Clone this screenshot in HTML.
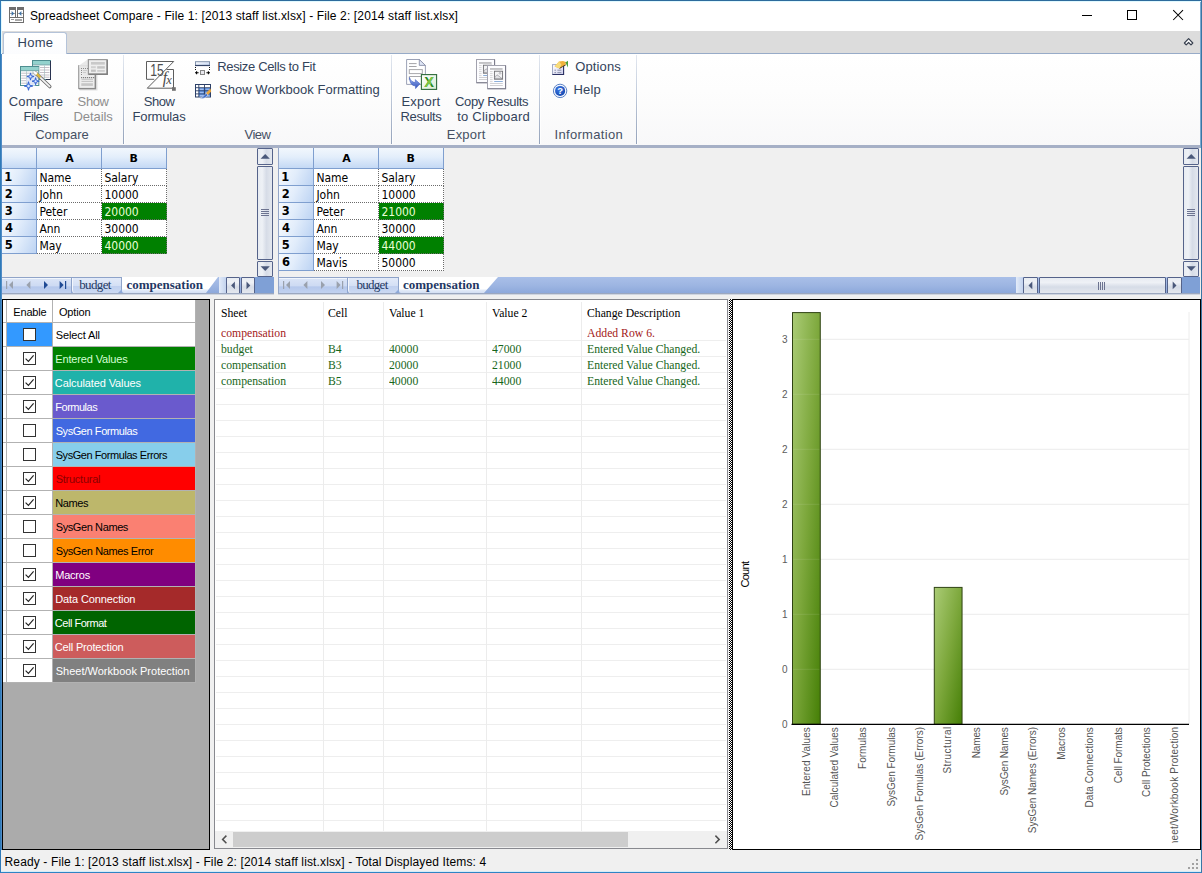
<!DOCTYPE html>
<html lang="en"><head><meta charset="utf-8"><title>Spreadsheet Compare</title>
<style>html,body{margin:0;padding:0;}
body{width:1202px;height:873px;overflow:hidden;position:relative;background:#f0f0f0;font-family:"Liberation Sans",sans-serif;font-size:12px;color:#000;}
div,span{box-sizing:border-box;}
.a{position:absolute;}
.t{position:absolute;white-space:pre;line-height:1;}
#win{position:absolute;left:0;top:0;width:1202px;height:873px;border:1px solid #2f7ab8;border-top-color:#2d6b9c;border-right-color:#3a76a4;border-bottom-color:#2f84c4;pointer-events:none;}
#winr{position:absolute;left:1200px;top:1px;width:1px;height:147px;background:#7aaad0;}
#title{left:1px;top:1px;width:1200px;height:30px;background:#fff;}
#tabs{left:1px;top:31px;width:1200px;height:22px;background:#dcdcdc;}
#tabline{left:1px;top:53px;width:1200px;height:1px;background:#97abc8;}
#hometab{left:3px;top:32px;width:64px;height:22px;background:linear-gradient(#ffffff,#fbfcfe);border:1px solid #b4c3d9;border-bottom:none;border-radius:3px 3px 0 0;}
#ribbon{left:1px;top:54px;width:1200px;height:91px;background:linear-gradient(#ffffff 0%,#fdfdfd 40%,#f8f8f9 100%);}
#ribbot{left:1px;top:145px;width:1200px;height:3px;background:#a6b0c6;}
.sep{position:absolute;top:55px;width:1px;height:89px;background:linear-gradient(#e3e8f0 0%,#c3cddd 40%,#95a3bb 100%);box-shadow:1px 0 0 rgba(255,255,255,0.8);}
.pane{background:#f0f0f0;}
.hc{background:linear-gradient(#f2f7fd 0%,#e3eefb 45%,#c4d9f5 100%);border-right:1px solid #7f9fcf;border-bottom:1px solid #7f9fcf;}
.rh{background:linear-gradient(115deg,#f6fafe 0%,#e2edfb 45%,#bcd3f3 100%);border-right:1px solid #7f9fcf;border-bottom:1px solid #7f9fcf;}
.cell{background:#fff;border-right:1px dotted #6a6a6a;border-bottom:1px dotted #6a6a6a;}
.cell.hl{background:#008000;}
.sbtn{background:linear-gradient(90deg,#e8ecf2 0%,#eef1f6 30%,#d6dce7 60%,#e4e8ef 100%);border:1px solid #55638a;border-radius:1px;}
.sbtn.h{background:linear-gradient(#e8ecf2 0%,#eef1f6 30%,#d6dce7 60%,#e4e8ef 100%);}
.tbar{background:linear-gradient(#a9bfe8 0%,#9db5e2 50%,#8ba7da 100%);}
.tnav{background:linear-gradient(#dbe5f7 0%,#cddaf3 50%,#b5c8ec 55%,#c3d3f0 100%);border-top:1px solid #90a4c8;box-shadow:inset 0 1px 0 #f1f6fd;}
.btab{background:linear-gradient(#e2eaf9 0%,#d5e0f5 50%,#c0d0ef 55%,#cbd9f2 100%);border:1px solid #8ea3c9;border-bottom:none;border-radius:0 0 3px 3px;box-shadow:inset 1px 0 0 #f4f7fd;}
#optpanel{background:#ababab;border:1px solid #000;}
.cb{width:13px;height:13px;background:#fff;border:1px solid #333;}
#reslist{background:#fff;border:1px solid #88898f;}
.gl{left:216px;width:510px;height:1px;background:#eeeeee;}
#chart{background:#fff;border:1px solid #000;}
#split{background-image:repeating-conic-gradient(#000 0% 25%,#fff 0% 50%);background-size:2px 2px;}
.rs{font-family:"Liberation Serif",serif;font-size:13px;transform:scaleX(0.9);transform-origin:0 0;}
#winl{position:absolute;left:1px;top:54px;width:1px;height:796px;background:#4f8bc6;}
.glow{position:absolute;background:#e0f9ff;}
</style></head><body>
<div id="title" class="a"></div>
<div id="tabs" class="a"></div>
<div id="tabline" class="a"></div>
<div id="ribbon" class="a"></div>
<div id="hometab" class="a"></div>
<div id="ribbot" class="a"></div>
<!-- p_ribbon -->
<span class="t" style="left:29.97px;top:10.0px;font-family:'Liberation Sans',sans-serif;font-size:12px;letter-spacing:0.137px;color:#000;">Spreadsheet Compare - File 1: [2013 staff list.xlsx] - File 2: [2014 staff list.xlsx]</span>
<span class="t" style="left:17.44px;top:36.0px;font-family:'Liberation Sans',sans-serif;font-size:13px;letter-spacing:0.318px;color:#33435a;">Home</span>
<span class="t" style="left:8.84px;top:95.0px;font-family:'Liberation Sans',sans-serif;font-size:13px;letter-spacing:0.128px;color:#33435a;">Compare</span>
<span class="t" style="left:23.54px;top:110.0px;font-family:'Liberation Sans',sans-serif;font-size:13px;letter-spacing:-0.555px;color:#33435a;">Files</span>
<span class="t" style="left:77.62px;top:95.0px;font-family:'Liberation Sans',sans-serif;font-size:13px;letter-spacing:-0.390px;color:#8e8e8e;">Show</span>
<span class="t" style="left:73.44px;top:110.0px;font-family:'Liberation Sans',sans-serif;font-size:13px;letter-spacing:-0.067px;color:#8e8e8e;">Details</span>
<span class="t" style="left:143.82px;top:95.0px;font-family:'Liberation Sans',sans-serif;font-size:13px;letter-spacing:-0.456px;color:#33435a;">Show</span>
<span class="t" style="left:132.54px;top:110.0px;font-family:'Liberation Sans',sans-serif;font-size:13px;letter-spacing:-0.149px;color:#33435a;">Formulas</span>
<span class="t" style="left:217.24px;top:60.0px;font-family:'Liberation Sans',sans-serif;font-size:13px;letter-spacing:-0.345px;color:#33435a;">Resize Cells to Fit</span>
<span class="t" style="left:219.12px;top:83.0px;font-family:'Liberation Sans',sans-serif;font-size:13px;letter-spacing:0.024px;color:#33435a;">Show Workbook Formatting</span>
<span class="t" style="left:401.44px;top:95.0px;font-family:'Liberation Sans',sans-serif;font-size:13px;letter-spacing:0.216px;color:#33435a;">Export</span>
<span class="t" style="left:400.54px;top:110.0px;font-family:'Liberation Sans',sans-serif;font-size:13px;letter-spacing:-0.369px;color:#33435a;">Results</span>
<span class="t" style="left:455.04px;top:95.0px;font-family:'Liberation Sans',sans-serif;font-size:13px;letter-spacing:-0.353px;color:#33435a;">Copy Results</span>
<span class="t" style="left:457.21px;top:110.0px;font-family:'Liberation Sans',sans-serif;font-size:13px;letter-spacing:0.228px;color:#33435a;">to Clipboard</span>
<span class="t" style="left:575.19px;top:60.0px;font-family:'Liberation Sans',sans-serif;font-size:13px;letter-spacing:0.130px;color:#33435a;">Options</span>
<span class="t" style="left:573.54px;top:83.0px;font-family:'Liberation Sans',sans-serif;font-size:13px;letter-spacing:0.158px;color:#33435a;">Help</span>
<span class="t" style="left:35.14px;top:128.0px;font-family:'Liberation Sans',sans-serif;font-size:13px;letter-spacing:0.028px;color:#465063;">Compare</span>
<span class="t" style="left:244.55px;top:128.0px;font-family:'Liberation Sans',sans-serif;font-size:13px;letter-spacing:-0.507px;color:#465063;">View</span>
<span class="t" style="left:446.84px;top:128.0px;font-family:'Liberation Sans',sans-serif;font-size:13px;letter-spacing:0.176px;color:#465063;">Export</span>
<span class="t" style="left:554.61px;top:128.0px;font-family:'Liberation Sans',sans-serif;font-size:13px;letter-spacing:0.300px;color:#465063;">Information</span>
<div class="sep" style="left:123px"></div>
<div class="sep" style="left:391px"></div>
<div class="sep" style="left:539px"></div>
<div class="sep" style="left:636px"></div>
<!-- p_icons -->
<svg class="a" style="left:8px;top:6px" width="18" height="18" viewBox="8 6 18 18" ><rect x="9" y="7" width="7" height="11" fill="#6e6e6e"/><rect x="10" y="10" width="5" height="7" fill="#fff"/><rect x="10" y="13" width="5" height="1" fill="#9a9a9a"/><rect x="17" y="7" width="7" height="11" fill="#6e6e6e"/><rect x="18" y="10" width="5" height="7" fill="#fff"/><rect x="18" y="13" width="5" height="1" fill="#9a9a9a"/><path d="M11.6 11 L14.2 13.5 L11.6 16 Z" fill="#3f74a8"/><path d="M21.4 11 L18.8 13.5 L21.4 16 Z" fill="#3f74a8"/><rect x="9.5" y="17.5" width="14" height="5" fill="#fff" stroke="#6e6e6e" stroke-width="1"/><rect x="11" y="19" width="3" height="1" fill="#9a9a9a"/><rect x="15" y="19" width="7" height="2" fill="#a8a8a8"/></svg>
<svg class="a" style="left:18px;top:57px" width="36" height="36" viewBox="18 57 36 36" ><rect x="32.5" y="60.5" width="18" height="19" fill="#fff" stroke="#4e8e90" stroke-width="1"/><rect x="33" y="61" width="17" height="3.6" fill="#93d2cd"/><path d="M33 64.9 H50" stroke="#4e8e90" stroke-width="0.8"/><path d="M50.5 61 V80 M46 79.5 H50.5" stroke="#28324f" stroke-width="1" fill="none"/><path d="M44.5 65 V79" stroke="#b9d6d6" stroke-width="1"/><path d="M40 67.5 H49.5" stroke="#b6aeb9" stroke-width="0.8"/><path d="M40 70 H49.5" stroke="#b6aeb9" stroke-width="0.8"/><path d="M40 72.5 H49.5" stroke="#b6aeb9" stroke-width="0.8"/><path d="M40 75 H49.5" stroke="#b6aeb9" stroke-width="0.8"/><path d="M40 77.2 H49.5" stroke="#b6aeb9" stroke-width="0.8"/><rect x="20.5" y="66.5" width="18.3" height="19" fill="#fff" stroke="#4e8e90" stroke-width="1"/><rect x="21" y="67" width="17.4" height="3.4" fill="#93d2cd"/><path d="M21 70.7 H38.6" stroke="#4e8e90" stroke-width="0.8"/><path d="M26.5 71 V85 M32.8 71 V85" stroke="#bcd8d8" stroke-width="1"/><path d="M21.2 73.2 H38.2" stroke="#b8b2bb" stroke-width="0.8"/><path d="M21.2 75.7 H38.2" stroke="#b8b2bb" stroke-width="0.8"/><path d="M21.2 78.2 H38.2" stroke="#b8b2bb" stroke-width="0.8"/><path d="M21.2 80.7 H38.2" stroke="#b8b2bb" stroke-width="0.8"/><path d="M21.2 83.2 H38.2" stroke="#b8b2bb" stroke-width="0.8"/><circle cx="32" cy="80.5" r="6" fill="#dfe8fb" opacity="0.75"/><path d="M30.5 72.9 L31.292 75.708 L34.1 76.5 L31.292 77.292 L30.5 80.1 L29.708 77.292 L26.9 76.5 L29.708 75.708 Z" fill="#7aa2ee" stroke="#2f5fd0" stroke-width="0.9" stroke-linejoin="miter"/><circle cx="30.5" cy="76.5" r="1.0080000000000002" fill="#dfe9ff"/><path d="M35.6 77.60000000000001 L36.392 80.408 L39.2 81.2 L36.392 81.992 L35.6 84.8 L34.808 81.992 L32.0 81.2 L34.808 80.408 Z" fill="#7aa2ee" stroke="#2f5fd0" stroke-width="0.9" stroke-linejoin="miter"/><circle cx="35.6" cy="81.2" r="1.0080000000000002" fill="#dfe9ff"/><path d="M28.5 81.7 L29.446 85.054 L32.8 86 L29.446 86.946 L28.5 90.3 L27.554 86.946 L24.2 86 L27.554 85.054 Z" fill="#7aa2ee" stroke="#2f5fd0" stroke-width="0.9" stroke-linejoin="miter"/><circle cx="28.5" cy="86" r="1.204" fill="#dfe9ff"/><path d="M35.2 72.8 L49.8 86.6" stroke="#6b6b6b" stroke-width="3.4" stroke-linecap="round"/><path d="M35.4 72.9 L49.6 86.4" stroke="#f4f4f4" stroke-width="1.9" stroke-linecap="round"/><path d="M36.2 73.4 L40.4 77.5" stroke="#d9b63a" stroke-width="2.3" stroke-linecap="butt"/><path d="M34.7 72.3 L36 73.5" stroke="#fff" stroke-width="2.4" stroke-linecap="round"/></svg>
<svg class="a" style="left:76px;top:57px" width="34" height="36" viewBox="76 57 34 36" ><rect x="79.5" y="67" width="18" height="23.5" fill="#e2e2e2"/><rect x="78.7" y="65.7" width="16.8" height="22.8" fill="#ededed" stroke="#9d9d9d" stroke-width="1.2"/><path d="M95.3 66 V88.6 H79" stroke="#8a8a8a" stroke-width="1.3" fill="none"/><path d="M78.7 65.7 L88 59.3 L88 74.5 L95 76 L84 76 Z" fill="#e6e6e6" opacity="0.9"/><rect x="81" y="68" width="1" height="1" fill="#8a8a8a"/><rect x="83" y="68" width="1" height="1" fill="#8a8a8a"/><rect x="85" y="68" width="1" height="1" fill="#8a8a8a"/><rect x="87" y="68" width="1" height="1" fill="#8a8a8a"/><rect x="81" y="70" width="1" height="1" fill="#8a8a8a"/><rect x="81" y="72" width="1" height="1" fill="#8a8a8a"/><rect x="81" y="74" width="1" height="1" fill="#8a8a8a"/><rect x="81" y="77" width="1.2" height="1.2" fill="#7c7c7c"/><rect x="83" y="77" width="1.2" height="1.2" fill="#7c7c7c"/><rect x="85" y="77" width="1.2" height="1.2" fill="#7c7c7c"/><rect x="87" y="77" width="1.2" height="1.2" fill="#7c7c7c"/><rect x="89" y="77" width="1.2" height="1.2" fill="#7c7c7c"/><rect x="91" y="77" width="1.2" height="1.2" fill="#7c7c7c"/><rect x="93" y="77" width="1.2" height="1.2" fill="#7c7c7c"/><path d="M83 70.5 H87 M83 72.5 H86" stroke="#c4c4c4" stroke-width="0.8"/><path d="M81.5 79.3 H93 M81.5 81.4 H93" stroke="#b5b5b5" stroke-width="0.8"/><rect x="81.3" y="83.2" width="11.6" height="2.7" fill="#c6c6c6"/><rect x="88.4" y="59.6" width="18.8" height="14.6" fill="#eeeeee" stroke="#9a9a9a" stroke-width="1.2"/><path d="M107.2 60 V74.3 H88.5" stroke="#808080" stroke-width="1.5" fill="none"/><rect x="91" y="62" width="13.8" height="2.6" fill="#c9c9c9"/><rect x="91" y="66.2" width="4.8" height="2" fill="#d0d0d0"/><rect x="97.2" y="66.2" width="7.6" height="2.4" fill="#c4c4c4"/><rect x="91" y="69.6" width="4.8" height="2.2" fill="#c0c0c0"/><rect x="97.2" y="70" width="7.6" height="1.8" fill="#cdcdcd"/></svg>
<svg class="a" style="left:144px;top:58px" width="34" height="36" viewBox="144 58 34 36" ><path d="M173.7 61.5 H146.5 V79.3 H154.2 M173.7 61.5 L147.3 88.2 H173.5 V69.5 H166.5" stroke="#5d5d5d" stroke-width="1" fill="none"/><rect x="172" y="87.2" width="3.8" height="3.6" fill="#707070"/><text x="150.2" y="75.5" font-family="'Liberation Sans',sans-serif" font-size="16.2" fill="#4e4e4e" textLength="13.6" lengthAdjust="spacingAndGlyphs">15</text><text x="162.8" y="83.2" font-family="'Liberation Serif',serif" font-style="italic" font-size="15.7" fill="#4a4a4a">f</text><text x="166.2" y="84" font-family="'Liberation Serif',serif" font-style="italic" font-size="12.5" fill="#4a4a4a">x</text></svg>
<svg class="a" style="left:193px;top:59px" width="20" height="18" viewBox="193 59 20 18" ><defs><linearGradient id="rg1" x1="0" y1="0" x2="1" y2="1"><stop offset="0" stop-color="#fff"/><stop offset="1" stop-color="#c3d4f2"/></linearGradient></defs><rect x="195.5" y="61.7" width="14" height="3.6" fill="url(#rg1)" stroke="#8292ab" stroke-width="1"/><path d="M195 65.6 H210" stroke="#2b3a5e" stroke-width="1"/><path d="M195.5 67 V71 M209.5 67 V71" stroke="#111" stroke-width="1" stroke-dasharray="1 1"/><path d="M195 72.7 H198.6 M196.6 71.2 V74.2 M206.4 72.7 H210 M208.4 71.2 V74.2" stroke="#000" stroke-width="1.1"/><rect x="200.5" y="70.5" width="4" height="4" fill="#e8e8ee" stroke="#868686" stroke-width="1"/></svg>
<svg class="a" style="left:193px;top:82px" width="20" height="18" viewBox="193 82 20 18" ><rect x="195.5" y="84.5" width="15" height="12.5" fill="#fff" stroke="#2c4068" stroke-width="1"/><rect x="199" y="88" width="11" height="8.5" fill="#4f86d8"/><path d="M195.5 87.7 H210.5 M195.5 90.8 H210.5 M195.5 93.9 H210.5 M198.8 84.5 V97 M204.5 84.5 V97" stroke="#2c4068" stroke-width="0.9"/><rect x="199.8" y="88.6" width="3.8" height="1.5" fill="#9dbcf0"/><rect x="205.5" y="88.6" width="4" height="1.5" fill="#8eb2ec"/><rect x="199.8" y="91.7" width="3.8" height="1.5" fill="#9dbcf0"/><rect x="205.5" y="91.7" width="4" height="1.5" fill="#8eb2ec"/><rect x="199.8" y="94.8" width="3.8" height="1.5" fill="#9dbcf0"/><rect x="205.5" y="94.8" width="4" height="1.5" fill="#8eb2ec"/><path d="M205.6 93.4 L210.4 88.6 L211.2 91.6 L207.6 95.4 Z" fill="#e9a63e"/><path d="M200 98.6 C203 98.8 206.5 97.6 207.8 95 L206 93.2 C204.6 95.4 203 97 200 98.6 Z" fill="#3c6bc9" stroke="#dfe8f8" stroke-width="0.6"/></svg>
<svg class="a" style="left:404px;top:57px" width="36" height="36" viewBox="404 57 36 36" ><defs><linearGradient id="eg1" x1="0" y1="0" x2="0" y2="1"><stop offset="0" stop-color="#9db6f2"/><stop offset="1" stop-color="#2f4fb8"/></linearGradient><linearGradient id="eg2" x1="0" y1="0" x2="1" y2="1"><stop offset="0" stop-color="#ffffff"/><stop offset="1" stop-color="#d6ecd2"/></linearGradient></defs><path d="M406.6 59.5 H419.3 L425.4 65.4 V84.4 H406.6 Z" fill="#fff" stroke="#9197ae" stroke-width="0.9"/><path d="M419.3 59.5 V65.4 H425.4 Z" fill="#dfe6f6" stroke="#8a90a8" stroke-width="0.9"/><path d="M409 63.6 H416.6 M409 66.5 H416.6" stroke="#a4a4a8" stroke-width="1"/><rect x="409.3" y="69.6" width="13" height="4" fill="#fff" stroke="#a8a8ac" stroke-width="1"/><path d="M409.3 80 V76.5 H422" fill="none" stroke="#a8a8ac" stroke-width="1"/><path d="M409.5 77.5 C410.5 81 413 82.5 415.6 82.3 L415.2 79.6 L420 83.8 L415.6 88.6 L415.4 85.8 C412 86 409.6 83 409.5 77.5 Z" fill="url(#eg1)" stroke="#3555bf" stroke-width="0.5"/><rect x="421.4" y="74.6" width="15.2" height="14.8" fill="url(#eg2)" stroke="#2d6a3a" stroke-width="1.1"/><text x="429.1" y="87.3" text-anchor="middle" font-family="'Liberation Sans',sans-serif" font-weight="700" font-size="14.5" fill="#2a8a22">X</text><clipPath id="xclip"><path d="M431 76 H436 L428 89 H423 Z"/></clipPath><text x="429.1" y="87.3" text-anchor="middle" clip-path="url(#xclip)" font-family="'Liberation Sans',sans-serif" font-weight="700" font-size="14.5" fill="#7cc840">X</text></svg>
<svg class="a" style="left:474px;top:57px" width="36" height="36" viewBox="474 57 36 36" ><rect x="476.5" y="59.5" width="18" height="23.2" fill="#fdfdff" stroke="#a2a2ae" stroke-width="1"/><path d="M494.6 59.6 V82.8 H476.6" stroke="#7c7c8a" stroke-width="1.1" fill="none"/><rect x="479" y="62" width="12.6" height="1.9" fill="#c3c3c6"/><rect x="479" y="65.3" width="2.6" height="0.8" fill="#c9c9cc"/><rect x="479" y="67.3" width="2.6" height="0.8" fill="#c9c9cc"/><rect x="479" y="69.3" width="2.6" height="0.8" fill="#c9c9cc"/><rect x="479" y="71.3" width="2.6" height="0.8" fill="#c9c9cc"/><rect x="479" y="73.3" width="2.6" height="0.8" fill="#c9c9cc"/><rect x="479" y="75.3" width="2.6" height="0.8" fill="#c9c9cc"/><rect x="483.4" y="65.2" width="8.2" height="8" fill="#f4f4f6" stroke="#6e6e72" stroke-width="0.9"/><path d="M483.8 71 L486 68.8 L488 70.2 L491 72.6 H483.8 Z" fill="#e2e2e6" stroke="#77777c" stroke-width="0.5"/><circle cx="489" cy="67.3" r="0.9" fill="none" stroke="#8a8a90" stroke-width="0.5"/><rect x="483.2" y="75" width="8.6" height="0.9" fill="#7fa6d6"/><rect x="479" y="77.1" width="12.8" height="0.8" fill="#c4c4c8"/><rect x="479" y="79.1" width="12.8" height="0.8" fill="#c4c4c8"/><rect x="487.5" y="65.5" width="18" height="23.2" fill="#fdfdff" stroke="#a2a2ae" stroke-width="1"/><path d="M505.6 65.6 V88.8 H487.6" stroke="#7c7c8a" stroke-width="1.1" fill="none"/><rect x="490" y="68" width="12.6" height="1.9" fill="#c3c3c6"/><rect x="490" y="71.3" width="2.6" height="0.8" fill="#c9c9cc"/><rect x="490" y="73.3" width="2.6" height="0.8" fill="#c9c9cc"/><rect x="490" y="75.3" width="2.6" height="0.8" fill="#c9c9cc"/><rect x="490" y="77.3" width="2.6" height="0.8" fill="#c9c9cc"/><rect x="490" y="79.3" width="2.6" height="0.8" fill="#c9c9cc"/><rect x="490" y="81.3" width="2.6" height="0.8" fill="#c9c9cc"/><rect x="494.4" y="71.2" width="8.2" height="8" fill="#f4f4f6" stroke="#6e6e72" stroke-width="0.9"/><path d="M494.8 77 L497 74.8 L499 76.2 L502 78.6 H494.8 Z" fill="#e2e2e6" stroke="#77777c" stroke-width="0.5"/><circle cx="500" cy="73.3" r="0.9" fill="none" stroke="#8a8a90" stroke-width="0.5"/><rect x="494.2" y="81" width="8.6" height="0.9" fill="#7fa6d6"/><rect x="490" y="83.1" width="12.8" height="0.8" fill="#c4c4c8"/><rect x="490" y="85.1" width="12.8" height="0.8" fill="#c4c4c8"/></svg>
<svg class="a" style="left:550px;top:58px" width="20" height="18" viewBox="550 58 20 18" ><defs><linearGradient id="og1" x1="0" y1="0" x2="1" y2="1"><stop offset="0" stop-color="#fff"/><stop offset="1" stop-color="#cfd0ee"/></linearGradient></defs><rect x="552.5" y="64.6" width="11" height="9.8" fill="url(#og1)" stroke="#a3abc4" stroke-width="1"/><path d="M563.6 65 V74.5 H552.4" stroke="#2a2f62" stroke-width="1.1" fill="none"/><path d="M554.4 70.2 H556 M557.4 70.2 H561.4 M554.4 72.6 H556 M557.4 72.6 H561.4" stroke="#8f93ad" stroke-width="1"/><path d="M554.6 66.4 L559 61.6 L563 61 L566 62 L565.6 65 L562.6 66.6 L559.6 68.4 Z" fill="#f0b13c"/><path d="M554.6 66.4 L559 61.6 L561.4 64.6 L559.6 68.4 Z" fill="#f7dc7a"/><path d="M559.6 68.4 L562.6 66.6 L565.6 65" stroke="#3a2c1c" stroke-width="0.9" fill="none"/><path d="M565.4 62.4 L568 60.8 V67.4 Z" fill="#48a03e"/></svg>
<svg class="a" style="left:552px;top:83px" width="17" height="17" viewBox="552 83 17 17" ><defs><radialGradient id="hg1" cx="0.4" cy="0.35" r="0.8"><stop offset="0" stop-color="#3c7ae6"/><stop offset="1" stop-color="#0e3fa6"/></radialGradient></defs><circle cx="560.1" cy="90.9" r="6.7" fill="#f2f6ff" stroke="#5b82c4" stroke-width="1"/><circle cx="560.1" cy="90.9" r="5" fill="url(#hg1)"/><text x="560.1" y="94.4" text-anchor="middle" font-family="'Liberation Sans',sans-serif" font-weight="700" font-size="9.5" fill="#fff">?</text></svg>
<svg class="a" style="left:1075px;top:5px" width="115" height="22" viewBox="1075 5 115 22" ><path d="M1082 15.5 H1092" stroke="#000" stroke-width="1"/><rect x="1127.5" y="10.5" width="9" height="9" fill="none" stroke="#000" stroke-width="1"/><path d="M1173.2 10.2 L1183 20 M1183 10.2 L1173.2 20" stroke="#000" stroke-width="1.05"/></svg>
<svg class="a" style="left:1182px;top:36px" width="14" height="12" viewBox="1182 36 14 12" ><path d="M1184.4 43 L1188.6 38.7 L1192.8 43 L1191 44.9 L1188.6 42.5 L1186.2 44.9 Z" stroke="#38404f" stroke-width="1.2" fill="#fff" stroke-linejoin="round"/></svg>
<!-- p_sheets -->
<div class="a pane" style="left:2px;top:148px;width:272px;height:146px">
<div class="a hc" style="left:0;top:0;width:35px;height:21px"></div>
<div class="a hc" style="left:35px;top:0;width:65px;height:21px"></div>
<div class="a hc" style="left:100px;top:0;width:65px;height:21px"></div>
<div class="a rh" style="left:0;top:21px;width:35px;height:17px"></div>
<div class="a cell" style="left:35px;top:21px;width:65px;height:17px"></div>
<div class="a cell" style="left:100px;top:21px;width:65px;height:17px"></div>
<div class="a rh" style="left:0;top:38px;width:35px;height:17px"></div>
<div class="a cell" style="left:35px;top:38px;width:65px;height:17px"></div>
<div class="a cell" style="left:100px;top:38px;width:65px;height:17px"></div>
<div class="a rh" style="left:0;top:55px;width:35px;height:17px"></div>
<div class="a cell" style="left:35px;top:55px;width:65px;height:17px"></div>
<div class="a cell hl" style="left:100px;top:55px;width:65px;height:17px"></div>
<div class="a rh" style="left:0;top:72px;width:35px;height:17px"></div>
<div class="a cell" style="left:35px;top:72px;width:65px;height:17px"></div>
<div class="a cell" style="left:100px;top:72px;width:65px;height:17px"></div>
<div class="a rh" style="left:0;top:89px;width:35px;height:17px"></div>
<div class="a cell" style="left:35px;top:89px;width:65px;height:17px"></div>
<div class="a cell hl" style="left:100px;top:89px;width:65px;height:17px"></div>
</div>
<span class="t" style="left:65.15px;top:153.0px;font-family:'DejaVu Sans','Liberation Sans',sans-serif;font-size:11px;font-weight:700;">A</span>
<span class="t" style="left:129.60px;top:153.0px;font-family:'DejaVu Sans','Liberation Sans',sans-serif;font-size:11px;font-weight:700;">B</span>
<span class="t" style="left:4.30px;top:172.1px;font-family:'DejaVu Sans','Liberation Sans',sans-serif;font-size:11.5px;font-weight:700;">1</span>
<span class="t" style="left:39.40px;top:172.0px;font-family:'DejaVu Sans Condensed','DejaVu Sans',sans-serif;font-size:12px;color:#000;">Name</span>
<span class="t" style="left:104.40px;top:172.0px;font-family:'DejaVu Sans Condensed','DejaVu Sans',sans-serif;font-size:12px;color:#000;">Salary</span>
<span class="t" style="left:4.69px;top:189.1px;font-family:'DejaVu Sans','Liberation Sans',sans-serif;font-size:11.5px;font-weight:700;">2</span>
<span class="t" style="left:39.40px;top:189.0px;font-family:'DejaVu Sans Condensed','DejaVu Sans',sans-serif;font-size:12px;color:#000;">John</span>
<span class="t" style="left:104.40px;top:189.0px;font-family:'DejaVu Sans Condensed','DejaVu Sans',sans-serif;font-size:12px;color:#000;">10000</span>
<span class="t" style="left:4.83px;top:206.1px;font-family:'DejaVu Sans','Liberation Sans',sans-serif;font-size:11.5px;font-weight:700;">3</span>
<span class="t" style="left:39.40px;top:206.0px;font-family:'DejaVu Sans Condensed','DejaVu Sans',sans-serif;font-size:12px;color:#000;">Peter</span>
<span class="t" style="left:104.40px;top:206.0px;font-family:'DejaVu Sans Condensed','DejaVu Sans',sans-serif;font-size:12px;color:#eaffd6;">20000</span>
<span class="t" style="left:5.08px;top:223.1px;font-family:'DejaVu Sans','Liberation Sans',sans-serif;font-size:11.5px;font-weight:700;">4</span>
<span class="t" style="left:39.40px;top:223.0px;font-family:'DejaVu Sans Condensed','DejaVu Sans',sans-serif;font-size:12px;color:#000;">Ann</span>
<span class="t" style="left:104.40px;top:223.0px;font-family:'DejaVu Sans Condensed','DejaVu Sans',sans-serif;font-size:12px;color:#000;">30000</span>
<span class="t" style="left:4.72px;top:240.1px;font-family:'DejaVu Sans','Liberation Sans',sans-serif;font-size:11.5px;font-weight:700;">5</span>
<span class="t" style="left:39.40px;top:240.0px;font-family:'DejaVu Sans Condensed','DejaVu Sans',sans-serif;font-size:12px;color:#000;">May</span>
<span class="t" style="left:104.40px;top:240.0px;font-family:'DejaVu Sans Condensed','DejaVu Sans',sans-serif;font-size:12px;color:#eaffd6;">40000</span>
<div class="a" style="left:278px;top:148px;width:1px;height:147px;background:#94a6c8"></div>
<div class="a pane" style="left:279px;top:148px;width:921px;height:146px">
<div class="a hc" style="left:0;top:0;width:35px;height:21px"></div>
<div class="a hc" style="left:35px;top:0;width:65px;height:21px"></div>
<div class="a hc" style="left:100px;top:0;width:65px;height:21px"></div>
<div class="a rh" style="left:0;top:21px;width:35px;height:17px"></div>
<div class="a cell" style="left:35px;top:21px;width:65px;height:17px"></div>
<div class="a cell" style="left:100px;top:21px;width:65px;height:17px"></div>
<div class="a rh" style="left:0;top:38px;width:35px;height:17px"></div>
<div class="a cell" style="left:35px;top:38px;width:65px;height:17px"></div>
<div class="a cell" style="left:100px;top:38px;width:65px;height:17px"></div>
<div class="a rh" style="left:0;top:55px;width:35px;height:17px"></div>
<div class="a cell" style="left:35px;top:55px;width:65px;height:17px"></div>
<div class="a cell hl" style="left:100px;top:55px;width:65px;height:17px"></div>
<div class="a rh" style="left:0;top:72px;width:35px;height:17px"></div>
<div class="a cell" style="left:35px;top:72px;width:65px;height:17px"></div>
<div class="a cell" style="left:100px;top:72px;width:65px;height:17px"></div>
<div class="a rh" style="left:0;top:89px;width:35px;height:17px"></div>
<div class="a cell" style="left:35px;top:89px;width:65px;height:17px"></div>
<div class="a cell hl" style="left:100px;top:89px;width:65px;height:17px"></div>
<div class="a rh" style="left:0;top:106px;width:35px;height:17px"></div>
<div class="a cell" style="left:35px;top:106px;width:65px;height:17px"></div>
<div class="a cell" style="left:100px;top:106px;width:65px;height:17px"></div>
</div>
<span class="t" style="left:342.15px;top:153.0px;font-family:'DejaVu Sans','Liberation Sans',sans-serif;font-size:11px;font-weight:700;">A</span>
<span class="t" style="left:406.60px;top:153.0px;font-family:'DejaVu Sans','Liberation Sans',sans-serif;font-size:11px;font-weight:700;">B</span>
<span class="t" style="left:281.30px;top:172.1px;font-family:'DejaVu Sans','Liberation Sans',sans-serif;font-size:11.5px;font-weight:700;">1</span>
<span class="t" style="left:316.40px;top:172.0px;font-family:'DejaVu Sans Condensed','DejaVu Sans',sans-serif;font-size:12px;color:#000;">Name</span>
<span class="t" style="left:381.40px;top:172.0px;font-family:'DejaVu Sans Condensed','DejaVu Sans',sans-serif;font-size:12px;color:#000;">Salary</span>
<span class="t" style="left:281.69px;top:189.1px;font-family:'DejaVu Sans','Liberation Sans',sans-serif;font-size:11.5px;font-weight:700;">2</span>
<span class="t" style="left:316.40px;top:189.0px;font-family:'DejaVu Sans Condensed','DejaVu Sans',sans-serif;font-size:12px;color:#000;">John</span>
<span class="t" style="left:381.40px;top:189.0px;font-family:'DejaVu Sans Condensed','DejaVu Sans',sans-serif;font-size:12px;color:#000;">10000</span>
<span class="t" style="left:281.83px;top:206.1px;font-family:'DejaVu Sans','Liberation Sans',sans-serif;font-size:11.5px;font-weight:700;">3</span>
<span class="t" style="left:316.40px;top:206.0px;font-family:'DejaVu Sans Condensed','DejaVu Sans',sans-serif;font-size:12px;color:#000;">Peter</span>
<span class="t" style="left:381.40px;top:206.0px;font-family:'DejaVu Sans Condensed','DejaVu Sans',sans-serif;font-size:12px;color:#eaffd6;">21000</span>
<span class="t" style="left:282.08px;top:223.1px;font-family:'DejaVu Sans','Liberation Sans',sans-serif;font-size:11.5px;font-weight:700;">4</span>
<span class="t" style="left:316.40px;top:223.0px;font-family:'DejaVu Sans Condensed','DejaVu Sans',sans-serif;font-size:12px;color:#000;">Ann</span>
<span class="t" style="left:381.40px;top:223.0px;font-family:'DejaVu Sans Condensed','DejaVu Sans',sans-serif;font-size:12px;color:#000;">30000</span>
<span class="t" style="left:281.73px;top:240.1px;font-family:'DejaVu Sans','Liberation Sans',sans-serif;font-size:11.5px;font-weight:700;">5</span>
<span class="t" style="left:316.40px;top:240.0px;font-family:'DejaVu Sans Condensed','DejaVu Sans',sans-serif;font-size:12px;color:#000;">May</span>
<span class="t" style="left:381.40px;top:240.0px;font-family:'DejaVu Sans Condensed','DejaVu Sans',sans-serif;font-size:12px;color:#eaffd6;">44000</span>
<span class="t" style="left:281.90px;top:257.1px;font-family:'DejaVu Sans','Liberation Sans',sans-serif;font-size:11.5px;font-weight:700;">6</span>
<span class="t" style="left:316.40px;top:257.0px;font-family:'DejaVu Sans Condensed','DejaVu Sans',sans-serif;font-size:12px;color:#000;">Mavis</span>
<span class="t" style="left:381.40px;top:257.0px;font-family:'DejaVu Sans Condensed','DejaVu Sans',sans-serif;font-size:12px;color:#000;">50000</span>
<div class="a sbtn" style="left:257px;top:148px;width:16px;height:17px"></div>
<div class="a sbtn" style="left:257px;top:166px;width:16px;height:94px"></div>
<div class="a sbtn" style="left:257px;top:261px;width:16px;height:16px"></div>
<svg class="a" style="left:257px;top:148px" width="16" height="130" viewBox="257 148 16 130"><path d="M260.56 158.8 L265.2 154.0 L269.84 158.8 Z" fill="#4a587a"/><path d="M260.56 266.20000000000005 L265.2 271.0 L269.84 266.20000000000005 Z" fill="#4a587a"/><path d="M261 209.5 H269" stroke="#6c7390" stroke-width="1"/><path d="M261 211.5 H269" stroke="#6c7390" stroke-width="1"/><path d="M261 213.5 H269" stroke="#6c7390" stroke-width="1"/><path d="M261 215.5 H269" stroke="#6c7390" stroke-width="1"/></svg>
<div class="a sbtn" style="left:1183px;top:148px;width:16px;height:17px"></div>
<div class="a sbtn" style="left:1183px;top:166px;width:16px;height:94px"></div>
<div class="a sbtn" style="left:1183px;top:261px;width:16px;height:16px"></div>
<svg class="a" style="left:1183px;top:148px" width="16" height="130" viewBox="1183 148 16 130"><path d="M1186.56 158.8 L1191.2 154.0 L1195.8400000000001 158.8 Z" fill="#4a587a"/><path d="M1186.56 266.20000000000005 L1191.2 271.0 L1195.8400000000001 266.20000000000005 Z" fill="#4a587a"/><path d="M1187 209.5 H1195" stroke="#6c7390" stroke-width="1"/><path d="M1187 211.5 H1195" stroke="#6c7390" stroke-width="1"/><path d="M1187 213.5 H1195" stroke="#6c7390" stroke-width="1"/><path d="M1187 215.5 H1195" stroke="#6c7390" stroke-width="1"/></svg>
<div class="a tbar" style="left:2px;top:277px;width:272px;height:17px"></div>
<div class="a tnav" style="left:2px;top:277px;width:69px;height:17px"></div>
<div class="a btab" style="left:71px;top:277px;width:51px;height:16px"></div>
<svg class="a" style="left:2px;top:277px" width="272" height="18" viewBox="2 277 272 18"><defs><linearGradient id="atg2" x1="0" y1="0" x2="0" y2="1"><stop offset="0" stop-color="#fff"/><stop offset="0.74" stop-color="#fff"/><stop offset="0.82" stop-color="#e3ebf8"/><stop offset="1" stop-color="#d3dff3"/></linearGradient></defs><path d="M122 277 H218 L206 293 H124 Q122 293 122 291 Z" fill="url(#atg2)"/><path d="M118 293 L122 289 V293 Z" fill="#8ea9d8"/><path d="M6.6 281 V289" stroke="#9aa1ad" stroke-width="1.2"/><path d="M13.0 281 L9.0 285 L13.0 289 Z" fill="#9aa1ad"/><path d="M30.4 281 L26.4 285 L30.4 289 Z" fill="#9aa1ad"/><path d="M44.0 281 L48.0 285 L44.0 289 Z" fill="#1f4a94"/><path d="M59.6 281 L63.6 285 L59.6 289 Z" fill="#1f4a94"/><path d="M65.6 281 V289" stroke="#1f4a94" stroke-width="1.2"/></svg>
<span class="t" style="left:79.20px;top:278.0px;font-family:'Liberation Serif',serif;font-size:13px;letter-spacing:-0.622px;color:#1f3864;">budget</span>
<span class="t" style="left:126.46px;top:278.0px;font-family:'Liberation Serif',serif;font-size:13px;font-weight:700;color:#1f3864;">compensation</span>
<div class="a tbar" style="left:279px;top:277px;width:921px;height:17px"></div>
<div class="a tnav" style="left:279px;top:277px;width:68px;height:17px"></div>
<div class="a btab" style="left:347px;top:277px;width:52px;height:16px"></div>
<svg class="a" style="left:279px;top:277px" width="921" height="18" viewBox="279 277 921 18"><defs><linearGradient id="atg279" x1="0" y1="0" x2="0" y2="1"><stop offset="0" stop-color="#fff"/><stop offset="0.74" stop-color="#fff"/><stop offset="0.82" stop-color="#e3ebf8"/><stop offset="1" stop-color="#d3dff3"/></linearGradient></defs><path d="M399 277 H498 L484 293 H401 Q399 293 399 291 Z" fill="url(#atg279)"/><path d="M395 293 L399 289 V293 Z" fill="#8ea9d8"/><path d="M283.59999999999997 281 V289" stroke="#9aa1ad" stroke-width="1.2"/><path d="M290.0 281 L286.0 285 L290.0 289 Z" fill="#9aa1ad"/><path d="M307.4 281 L303.4 285 L307.4 289 Z" fill="#9aa1ad"/><path d="M321.0 281 L325.0 285 L321.0 289 Z" fill="#9aa1ad"/><path d="M336.6 281 L340.6 285 L336.6 289 Z" fill="#9aa1ad"/><path d="M342.6 281 V289" stroke="#9aa1ad" stroke-width="1.2"/></svg>
<span class="t" style="left:356.40px;top:278.0px;font-family:'Liberation Serif',serif;font-size:13px;letter-spacing:-0.702px;color:#1f3864;">budget</span>
<span class="t" style="left:402.96px;top:278.0px;font-family:'Liberation Serif',serif;font-size:13px;font-weight:700;letter-spacing:0.006px;color:#1f3864;">compensation</span>
<div class="a" style="left:219px;top:277px;width:7px;height:17px;background:linear-gradient(90deg,#e3ebf8,#c3d3ee)"></div>
<div class="a sbtn h" style="left:226px;top:277px;width:14px;height:17px"></div>
<div class="a sbtn h" style="left:241px;top:277px;width:14px;height:17px"></div>
<div class="a" style="left:255px;top:277px;width:19px;height:17px;background:#7fa0d6"></div>
<div class="a" style="left:1016px;top:277px;width:7px;height:17px;background:linear-gradient(90deg,#e3ebf8,#c3d3ee)"></div>
<div class="a sbtn h" style="left:1023px;top:277px;width:15px;height:17px"></div>
<div class="a sbtn h" style="left:1039px;top:277px;width:127px;height:17px"></div>
<div class="a sbtn h" style="left:1167px;top:277px;width:15px;height:17px"></div>
<div class="a" style="left:1182px;top:277px;width:18px;height:17px;background:#7fa0d6"></div>
<svg class="a" style="left:0;top:277px" width="1202" height="18" viewBox="0 277 1202 18"><path d="M234.9 281.59999999999997 L231.1 285.4 L234.9 289.2 Z" fill="#4a587a"/><path d="M246.5 281.59999999999997 L250.3 285.4 L246.5 289.2 Z" fill="#4a587a"/><path d="M1032.3000000000002 281.59999999999997 L1028.5 285.4 L1032.3000000000002 289.2 Z" fill="#4a587a"/><path d="M1172.6999999999998 281.59999999999997 L1176.5 285.4 L1172.6999999999998 289.2 Z" fill="#4a587a"/><path d="M1098.5 282 V290" stroke="#6c7390" stroke-width="1"/><path d="M1100.5 282 V290" stroke="#6c7390" stroke-width="1"/><path d="M1102.5 282 V290" stroke="#6c7390" stroke-width="1"/><path d="M1104.5 282 V290" stroke="#6c7390" stroke-width="1"/></svg>
<div class="a" style="left:2px;top:293px;width:272px;height:1px;background:#9ba7bf"></div><div class="a" style="left:2px;top:294px;width:272px;height:1px;background:#cfd5e0"></div>
<div class="a" style="left:278px;top:293px;width:922px;height:1px;background:#9ba7bf"></div><div class="a" style="left:278px;top:294px;width:922px;height:1px;background:#cfd5e0"></div>
<!-- p_options -->
<div class="a" id="optpanel" style="left:2px;top:299px;width:208px;height:551px"></div>
<div class="a" style="left:3px;top:300px;width:192px;height:22px;background:#fff"></div>
<div class="a" style="left:3px;top:322px;width:193px;height:1px;background:#b2b2b2"></div>
<div class="a" style="left:3px;top:323px;width:49px;height:360px;background:#fff"></div>
<div class="a" style="left:7px;top:323px;width:45px;height:23px;background:#3399ff"></div>
<div class="a" style="left:53px;top:323px;width:142px;height:23px;background:#ffffff"></div>
<div class="a" style="left:3px;top:346px;width:193px;height:1px;background:#b2b2b2"></div>
<div class="a cb" style="left:23px;top:328px"></div>
<span class="t" style="left:55.70px;top:329.5px;font-family:'Liberation Sans',sans-serif;font-size:11px;letter-spacing:-0.102px;color:#000;">Select All</span>
<div class="a" style="left:53px;top:347px;width:142px;height:23px;background:#008000"></div>
<div class="a" style="left:3px;top:370px;width:193px;height:1px;background:#b2b2b2"></div>
<div class="a cb" style="left:23px;top:352px"></div>
<span class="t" style="left:55.31px;top:353.5px;font-family:'Liberation Sans',sans-serif;font-size:11px;letter-spacing:-0.156px;color:#d4ffd4;">Entered Values</span>
<div class="a" style="left:53px;top:371px;width:142px;height:23px;background:#20b2aa"></div>
<div class="a" style="left:3px;top:394px;width:193px;height:1px;background:#b2b2b2"></div>
<div class="a cb" style="left:23px;top:376px"></div>
<span class="t" style="left:54.85px;top:377.5px;font-family:'Liberation Sans',sans-serif;font-size:11px;letter-spacing:-0.113px;color:#fff;">Calculated Values</span>
<div class="a" style="left:53px;top:395px;width:142px;height:23px;background:#6a5acd"></div>
<div class="a" style="left:3px;top:418px;width:193px;height:1px;background:#b2b2b2"></div>
<div class="a cb" style="left:23px;top:400px"></div>
<span class="t" style="left:55.31px;top:401.5px;font-family:'Liberation Sans',sans-serif;font-size:11px;letter-spacing:-0.495px;color:#fff;">Formulas</span>
<div class="a" style="left:53px;top:419px;width:142px;height:23px;background:#4169e1"></div>
<div class="a" style="left:3px;top:442px;width:193px;height:1px;background:#b2b2b2"></div>
<div class="a cb" style="left:23px;top:424px"></div>
<span class="t" style="left:55.70px;top:425.5px;font-family:'Liberation Sans',sans-serif;font-size:11px;letter-spacing:-0.431px;color:#fff;">SysGen Formulas</span>
<div class="a" style="left:53px;top:443px;width:142px;height:23px;background:#87ceeb"></div>
<div class="a" style="left:3px;top:466px;width:193px;height:1px;background:#b2b2b2"></div>
<div class="a cb" style="left:23px;top:448px"></div>
<span class="t" style="left:55.70px;top:449.5px;font-family:'Liberation Sans',sans-serif;font-size:11px;letter-spacing:-0.435px;color:#000;">SysGen Formulas Errors</span>
<div class="a" style="left:53px;top:467px;width:142px;height:23px;background:#ff0000"></div>
<div class="a" style="left:3px;top:490px;width:193px;height:1px;background:#b2b2b2"></div>
<div class="a cb" style="left:23px;top:472px"></div>
<span class="t" style="left:55.70px;top:473.5px;font-family:'Liberation Sans',sans-serif;font-size:11px;letter-spacing:-0.249px;color:#8b0000;">Structural</span>
<div class="a" style="left:53px;top:491px;width:142px;height:23px;background:#bdb76b"></div>
<div class="a" style="left:3px;top:514px;width:193px;height:1px;background:#b2b2b2"></div>
<div class="a cb" style="left:23px;top:496px"></div>
<span class="t" style="left:55.31px;top:497.5px;font-family:'Liberation Sans',sans-serif;font-size:11px;letter-spacing:-0.416px;color:#000;">Names</span>
<div class="a" style="left:53px;top:515px;width:142px;height:23px;background:#fa8072"></div>
<div class="a" style="left:3px;top:538px;width:193px;height:1px;background:#b2b2b2"></div>
<div class="a cb" style="left:23px;top:520px"></div>
<span class="t" style="left:55.70px;top:521.5px;font-family:'Liberation Sans',sans-serif;font-size:11px;letter-spacing:-0.395px;color:#000;">SysGen Names</span>
<div class="a" style="left:53px;top:539px;width:142px;height:23px;background:#ff8c00"></div>
<div class="a" style="left:3px;top:562px;width:193px;height:1px;background:#b2b2b2"></div>
<div class="a cb" style="left:23px;top:544px"></div>
<span class="t" style="left:55.70px;top:545.5px;font-family:'Liberation Sans',sans-serif;font-size:11px;letter-spacing:-0.385px;color:#000;">SysGen Names Error</span>
<div class="a" style="left:53px;top:563px;width:142px;height:23px;background:#800080"></div>
<div class="a" style="left:3px;top:586px;width:193px;height:1px;background:#b2b2b2"></div>
<div class="a cb" style="left:23px;top:568px"></div>
<span class="t" style="left:55.31px;top:569.5px;font-family:'Liberation Sans',sans-serif;font-size:11px;letter-spacing:-0.236px;color:#fff;">Macros</span>
<div class="a" style="left:53px;top:587px;width:142px;height:23px;background:#a52a2a"></div>
<div class="a" style="left:3px;top:610px;width:193px;height:1px;background:#b2b2b2"></div>
<div class="a cb" style="left:23px;top:592px"></div>
<span class="t" style="left:55.31px;top:593.5px;font-family:'Liberation Sans',sans-serif;font-size:11px;letter-spacing:-0.125px;color:#fff;">Data Connection</span>
<div class="a" style="left:53px;top:611px;width:142px;height:23px;background:#006400"></div>
<div class="a" style="left:3px;top:634px;width:193px;height:1px;background:#b2b2b2"></div>
<div class="a cb" style="left:23px;top:616px"></div>
<span class="t" style="left:54.85px;top:617.5px;font-family:'Liberation Sans',sans-serif;font-size:11px;letter-spacing:-0.482px;color:#fff;">Cell Format</span>
<div class="a" style="left:53px;top:635px;width:142px;height:23px;background:#cd5c5c"></div>
<div class="a" style="left:3px;top:658px;width:193px;height:1px;background:#b2b2b2"></div>
<div class="a cb" style="left:23px;top:640px"></div>
<span class="t" style="left:54.85px;top:641.5px;font-family:'Liberation Sans',sans-serif;font-size:11px;letter-spacing:-0.192px;color:#fff;">Cell Protection</span>
<div class="a" style="left:53px;top:659px;width:142px;height:23px;background:#808080"></div>
<div class="a" style="left:3px;top:682px;width:193px;height:1px;background:#b2b2b2"></div>
<div class="a cb" style="left:23px;top:664px"></div>
<span class="t" style="left:55.70px;top:665.5px;font-family:'Liberation Sans',sans-serif;font-size:11px;letter-spacing:0.009px;color:#fff;">Sheet/Workbook Protection</span>
<div class="a" style="left:6px;top:300px;width:1px;height:383px;background:#b2b2b2"></div>
<div class="a" style="left:52px;top:300px;width:1px;height:383px;background:#b2b2b2"></div>
<div class="a" style="left:195px;top:300px;width:1px;height:383px;background:#b2b2b2"></div>
<svg class="a" style="left:0;top:299px" width="60" height="400" viewBox="0 299 60 400"><path d="M25.6 358.6 L28.4 361.4 L33.6 355.4" stroke="#222" stroke-width="1.15" fill="none"/><path d="M25.6 382.6 L28.4 385.4 L33.6 379.4" stroke="#222" stroke-width="1.15" fill="none"/><path d="M25.6 406.6 L28.4 409.4 L33.6 403.4" stroke="#222" stroke-width="1.15" fill="none"/><path d="M25.6 478.6 L28.4 481.4 L33.6 475.4" stroke="#222" stroke-width="1.15" fill="none"/><path d="M25.6 502.6 L28.4 505.4 L33.6 499.4" stroke="#222" stroke-width="1.15" fill="none"/><path d="M25.6 574.6 L28.4 577.4 L33.6 571.4" stroke="#222" stroke-width="1.15" fill="none"/><path d="M25.6 598.6 L28.4 601.4 L33.6 595.4" stroke="#222" stroke-width="1.15" fill="none"/><path d="M25.6 622.6 L28.4 625.4 L33.6 619.4" stroke="#222" stroke-width="1.15" fill="none"/><path d="M25.6 646.6 L28.4 649.4 L33.6 643.4" stroke="#222" stroke-width="1.15" fill="none"/><path d="M25.6 670.6 L28.4 673.4 L33.6 667.4" stroke="#222" stroke-width="1.15" fill="none"/></svg>
<span class="t" style="left:13.31px;top:306.5px;font-family:'Liberation Sans',sans-serif;font-size:11px;letter-spacing:-0.178px;">Enable</span>
<span class="t" style="left:58.88px;top:306.5px;font-family:'Liberation Sans',sans-serif;font-size:11px;letter-spacing:-0.158px;">Option</span>
<!-- p_results -->
<div class="a" id="reslist" style="left:214px;top:299px;width:514px;height:550px"></div>
<div class="a gl" style="top:340px"></div><div class="a gl" style="top:356px"></div><div class="a gl" style="top:372px"></div><div class="a gl" style="top:388px"></div><div class="a gl" style="top:404px"></div><div class="a gl" style="top:420px"></div><div class="a gl" style="top:436px"></div><div class="a gl" style="top:452px"></div><div class="a gl" style="top:468px"></div><div class="a gl" style="top:484px"></div><div class="a gl" style="top:500px"></div><div class="a gl" style="top:516px"></div><div class="a gl" style="top:532px"></div><div class="a gl" style="top:548px"></div><div class="a gl" style="top:564px"></div><div class="a gl" style="top:580px"></div><div class="a gl" style="top:596px"></div><div class="a gl" style="top:612px"></div><div class="a gl" style="top:628px"></div><div class="a gl" style="top:644px"></div><div class="a gl" style="top:660px"></div><div class="a gl" style="top:676px"></div><div class="a gl" style="top:692px"></div><div class="a gl" style="top:708px"></div><div class="a gl" style="top:724px"></div><div class="a gl" style="top:740px"></div><div class="a gl" style="top:756px"></div><div class="a gl" style="top:772px"></div><div class="a gl" style="top:788px"></div><div class="a gl" style="top:804px"></div><div class="a gl" style="top:820px"></div>
<div class="a" style="left:323px;top:302px;width:1px;height:529px;background:#ececec"></div>
<div class="a" style="left:383px;top:302px;width:1px;height:529px;background:#ececec"></div>
<div class="a" style="left:486px;top:302px;width:1px;height:529px;background:#ececec"></div>
<div class="a" style="left:581px;top:302px;width:1px;height:529px;background:#ececec"></div>
<div class="a" style="left:215px;top:831px;width:512px;height:17px;background:#f0f0f0"></div>
<div class="a" style="left:233px;top:832px;width:395px;height:15px;background:#cdcdcd"></div>
<svg class="a" style="left:215px;top:831px" width="512" height="17" viewBox="215 831 512 17"><path d="M226.4 835.6 L222.6 839.4 L226.4 843.2 M715.4 835.6 L719.2 839.4 L715.4 843.2" stroke="#505050" stroke-width="1.5" fill="none"/></svg>
<span class="t rs" style="left:221.2px;top:305.9px;color:#000">Sheet</span>
<span class="t rs" style="left:328.4px;top:305.9px;color:#000">Cell</span>
<span class="t rs" style="left:388.8px;top:305.9px;color:#000">Value 1</span>
<span class="t rs" style="left:491.8px;top:305.9px;color:#000">Value 2</span>
<span class="t rs" style="left:586.6px;top:305.9px;color:#000">Change Description</span>
<span class="t rs" style="left:221.2px;top:325.8px;color:#a32020">compensation</span>
<span class="t rs" style="left:586.6px;top:325.8px;color:#a32020">Added Row 6.</span>
<span class="t rs" style="left:221.2px;top:341.8px;color:#17661a">budget</span>
<span class="t rs" style="left:328.4px;top:341.8px;color:#17661a">B4</span>
<span class="t rs" style="left:388.8px;top:341.8px;color:#17661a">40000</span>
<span class="t rs" style="left:491.8px;top:341.8px;color:#17661a">47000</span>
<span class="t rs" style="left:586.6px;top:341.8px;color:#17661a">Entered Value Changed.</span>
<span class="t rs" style="left:221.2px;top:357.8px;color:#17661a">compensation</span>
<span class="t rs" style="left:328.4px;top:357.8px;color:#17661a">B3</span>
<span class="t rs" style="left:388.8px;top:357.8px;color:#17661a">20000</span>
<span class="t rs" style="left:491.8px;top:357.8px;color:#17661a">21000</span>
<span class="t rs" style="left:586.6px;top:357.8px;color:#17661a">Entered Value Changed.</span>
<span class="t rs" style="left:221.2px;top:373.8px;color:#17661a">compensation</span>
<span class="t rs" style="left:328.4px;top:373.8px;color:#17661a">B5</span>
<span class="t rs" style="left:388.8px;top:373.8px;color:#17661a">40000</span>
<span class="t rs" style="left:491.8px;top:373.8px;color:#17661a">44000</span>
<span class="t rs" style="left:586.6px;top:373.8px;color:#17661a">Entered Value Changed.</span>
<!-- p_chart -->
<div class="a" id="chart" style="left:732px;top:299px;width:469px;height:551px"></div>
<svg class="a" style="left:733px;top:300px" width="467" height="549" viewBox="733 300 467 549"><defs><linearGradient id="bg1" x1="0" y1="0" x2="1" y2="1"><stop offset="0" stop-color="#abcc76"/><stop offset="0.5" stop-color="#7ca73b"/><stop offset="1" stop-color="#457f06"/></linearGradient></defs><path d="M792.0 669.3 H1189.0" stroke="#ebebeb" stroke-width="1"/><path d="M792.0 614.3 H1189.0" stroke="#ebebeb" stroke-width="1"/><path d="M792.0 559.3 H1189.0" stroke="#ebebeb" stroke-width="1"/><path d="M792.0 504.3 H1189.0" stroke="#ebebeb" stroke-width="1"/><path d="M792.0 449.3 H1189.0" stroke="#ebebeb" stroke-width="1"/><path d="M792.0 394.3 H1189.0" stroke="#ebebeb" stroke-width="1"/><path d="M792.0 339.3 H1189.0" stroke="#ebebeb" stroke-width="1"/><path d="M1189.0 312 V724.3" stroke="#ececec" stroke-width="1"/><rect x="792.50" y="312.60" width="27.76" height="411.70" fill="url(#bg1)" stroke="#2f4313" stroke-width="1"/><rect x="934.29" y="587.40" width="27.76" height="136.90" fill="url(#bg1)" stroke="#2f4313" stroke-width="1"/><path d="M793.0 669.3 H819.4" stroke="#ffffff" stroke-opacity="0.10" stroke-width="1"/><path d="M793.0 614.3 H819.4" stroke="#ffffff" stroke-opacity="0.10" stroke-width="1"/><path d="M793.0 559.3 H819.4" stroke="#ffffff" stroke-opacity="0.10" stroke-width="1"/><path d="M793.0 504.3 H819.4" stroke="#ffffff" stroke-opacity="0.10" stroke-width="1"/><path d="M793.0 449.3 H819.4" stroke="#ffffff" stroke-opacity="0.10" stroke-width="1"/><path d="M793.0 394.3 H819.4" stroke="#ffffff" stroke-opacity="0.10" stroke-width="1"/><path d="M793.0 339.3 H819.4" stroke="#ffffff" stroke-opacity="0.10" stroke-width="1"/><path d="M791.5 724.3 H1189.0" stroke="#000" stroke-width="1.2"/><text x="787.6" y="727.9" text-anchor="end" font-family="'Liberation Sans',sans-serif" font-size="10" fill="#5c5c5c">0</text><text x="787.6" y="672.9" text-anchor="end" font-family="'Liberation Sans',sans-serif" font-size="10" fill="#5c5c5c">0</text><text x="787.6" y="617.9" text-anchor="end" font-family="'Liberation Sans',sans-serif" font-size="10" fill="#5c5c5c">1</text><text x="787.6" y="562.9" text-anchor="end" font-family="'Liberation Sans',sans-serif" font-size="10" fill="#5c5c5c">1</text><text x="787.6" y="507.9" text-anchor="end" font-family="'Liberation Sans',sans-serif" font-size="10" fill="#5c5c5c">2</text><text x="787.6" y="452.9" text-anchor="end" font-family="'Liberation Sans',sans-serif" font-size="10" fill="#5c5c5c">2</text><text x="787.6" y="397.9" text-anchor="end" font-family="'Liberation Sans',sans-serif" font-size="10" fill="#5c5c5c">2</text><text x="787.6" y="342.9" text-anchor="end" font-family="'Liberation Sans',sans-serif" font-size="10" fill="#5c5c5c">3</text><text transform="translate(749.2 587.55) rotate(-90)" font-family="'Liberation Sans',sans-serif" font-size="11" letter-spacing="-0.709" fill="#000">Count</text><clipPath id="lblclip"><rect x="792" y="724" width="400" height="118.7"/></clipPath><g clip-path="url(#lblclip)"><text transform="translate(809.58 796.11) rotate(-90)" font-family="'Liberation Sans',sans-serif" font-size="10" letter-spacing="0.102" fill="#555555">Entered Values</text><text transform="translate(837.94 807.50) rotate(-90)" font-family="'Liberation Sans',sans-serif" font-size="10" letter-spacing="0.031" fill="#555555">Calculated Values</text><text transform="translate(866.29 769.01) rotate(-90)" font-family="'Liberation Sans',sans-serif" font-size="10" letter-spacing="0.029" fill="#555555">Formulas</text><text transform="translate(894.65 806.55) rotate(-90)" font-family="'Liberation Sans',sans-serif" font-size="10" letter-spacing="-0.044" fill="#555555">SysGen Formulas</text><text transform="translate(923.01 840.55) rotate(-90)" font-family="'Liberation Sans',sans-serif" font-size="10" letter-spacing="0.014" fill="#555555">SysGen Fomulas (Errors)</text><text transform="translate(951.36 773.55) rotate(-90)" font-family="'Liberation Sans',sans-serif" font-size="10" letter-spacing="0.435" fill="#555555">Structural</text><text transform="translate(979.72 758.21) rotate(-90)" font-family="'Liberation Sans',sans-serif" font-size="10" letter-spacing="-0.150" fill="#555555">Names</text><text transform="translate(1008.08 795.52) rotate(-90)" font-family="'Liberation Sans',sans-serif" font-size="10" letter-spacing="-0.150" fill="#555555">SysGen Names</text><text transform="translate(1036.44 833.15) rotate(-90)" font-family="'Liberation Sans',sans-serif" font-size="10" letter-spacing="-0.021" fill="#555555">SysGen Names (Errors)</text><text transform="translate(1064.79 759.71) rotate(-90)" font-family="'Liberation Sans',sans-serif" font-size="10" letter-spacing="-0.042" fill="#555555">Macros</text><text transform="translate(1093.15 807.51) rotate(-90)" font-family="'Liberation Sans',sans-serif" font-size="10" letter-spacing="0.058" fill="#555555">Data Connections</text><text transform="translate(1121.51 783.20) rotate(-90)" font-family="'Liberation Sans',sans-serif" font-size="10" letter-spacing="-0.056" fill="#555555">Cell Formats</text><text transform="translate(1149.86 797.00) rotate(-90)" font-family="'Liberation Sans',sans-serif" font-size="10" letter-spacing="-0.011" fill="#555555">Cell Protections</text><text transform="translate(1178.22 853.21) rotate(-90)" font-family="'Liberation Sans',sans-serif" font-size="10" letter-spacing="0.200" fill="#555555">Sheet/Workbook Protection</text></g></svg>
<div class="a" id="split" style="left:729px;top:299px;width:3px;height:551px"></div>
<!-- p_status -->
<div class="a" style="left:1px;top:850px;width:1200px;height:22px;background:#f0f0f0"></div>
<span class="t" style="left:4.52px;top:856.0px;font-family:'Liberation Sans',sans-serif;font-size:12px;letter-spacing:0.139px;">Ready - File 1: [2013 staff list.xlsx] - File 2: [2014 staff list.xlsx] - Total Displayed Items: 4</span>
<svg class="a" style="left:1186px;top:857px" width="14" height="14" viewBox="1186 857 14 14"><rect x="1196" y="859" width="2" height="2" fill="#a2a2a2"/><rect x="1192" y="863" width="2" height="2" fill="#a2a2a2"/><rect x="1196" y="863" width="2" height="2" fill="#a2a2a2"/><rect x="1188" y="867" width="2" height="2" fill="#a2a2a2"/><rect x="1192" y="867" width="2" height="2" fill="#a2a2a2"/><rect x="1196" y="867" width="2" height="2" fill="#a2a2a2"/></svg>
<div id="win"></div><div id="winr"></div><div id="winl"></div><div class="glow" style="left:1px;top:1px;width:1200px;height:1px"></div><div class="glow" style="left:1px;top:1px;width:1px;height:53px"></div><div class="glow" style="left:1200px;top:850px;width:1px;height:22px"></div><div class="glow" style="left:1px;top:871px;width:1200px;height:1px;background:#d4ecf8"></div>
</body></html>
